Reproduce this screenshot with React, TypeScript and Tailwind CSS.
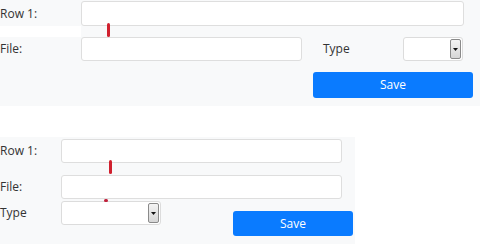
import React from "react";

function Caret() {
  return (
    <div className="flex h-full w-[11px] items-center justify-center rounded-[2px] border border-[#8a8a8a] bg-gradient-to-b from-[#f4f4f4] to-[#d6d6d6]">
      <svg width="5" height="3" viewBox="0 0 5 3">
        <path d="M0 0h5L2.5 3z" fill="#111" />
      </svg>
    </div>
  );
}

function Select({ className }: { className: string }) {
  return (
    <div className={`flex items-stretch justify-end rounded-[3px] border border-[#dcdcdc] bg-white p-[1px] ${className}`}>
      <Caret />
    </div>
  );
}

function Field({ className }: { className: string }) {
  return <div className={`rounded-[3px] border border-[#dedede] bg-white ${className}`} />;
}

function SaveButton({ className }: { className: string }) {
  return (
    <button className={`rounded-[3px] bg-[#0a7bff] text-[12px] text-white ${className}`}>Save</button>
  );
}

export default function App() {
  return (
    <div className="relative h-[244px] w-[480px] overflow-hidden bg-white font-['Open_Sans',sans-serif] text-[12px] text-[#333]">
      {/* wide layout */}
      <div className="h-[106px] bg-[#f8f9fa] pt-px">
        <div className="flex h-[25px] items-center">
          <span className="w-[81px]">Row 1:</span>
          <Field className="h-[25px] w-[383px]" />
        </div>
        <div className="h-[11px] w-[81px] bg-white" />
        <div className="flex h-[24px] items-center">
          <span className="w-[81px]">File:</span>
          <Field className="h-[24px] w-[221px]" />
          <span className="ml-[21px] w-[80px]">Type</span>
          <Select className="h-[24px] w-[60px]" />
        </div>
        <div className="mt-[11px] flex">
          <SaveButton className="ml-[313px] h-[26px] w-[160px]" />
        </div>
      </div>

      {/* narrow layout */}
      <div className="mt-[31px] h-[107px] w-[355px] bg-[#f8f9fa] pt-[2px]">
        <div className="flex h-[24px] items-center">
          <span className="w-[61px]">Row 1:</span>
          <Field className="h-[24px] w-[281px]" />
        </div>
        <div className="mt-[12px] flex h-[24px] items-center">
          <span className="w-[61px]">File:</span>
          <Field className="h-[24px] w-[281px]" />
        </div>
        <div className="mt-[2px] flex items-start">
          <span className="flex h-[24px] w-[61px] items-center">Type</span>
          <Select className="h-[24px] w-[100px]" />
          <SaveButton className="ml-[72px] mt-[10px] h-[25px] w-[120px]" />
        </div>
      </div>

      {/* cursor marks */}
      <div className="absolute left-[107px] top-[23px] h-[14px] w-[3px] rounded-full bg-[#d0202e]" />
      <div className="absolute left-[109px] top-[160px] h-[14px] w-[3px] rounded-full bg-[#d0202e]" />
      <div className="absolute left-[104px] top-[199px] h-[3px] w-[4px] rounded-full bg-[#c0203a]" />
    </div>
  );
}
